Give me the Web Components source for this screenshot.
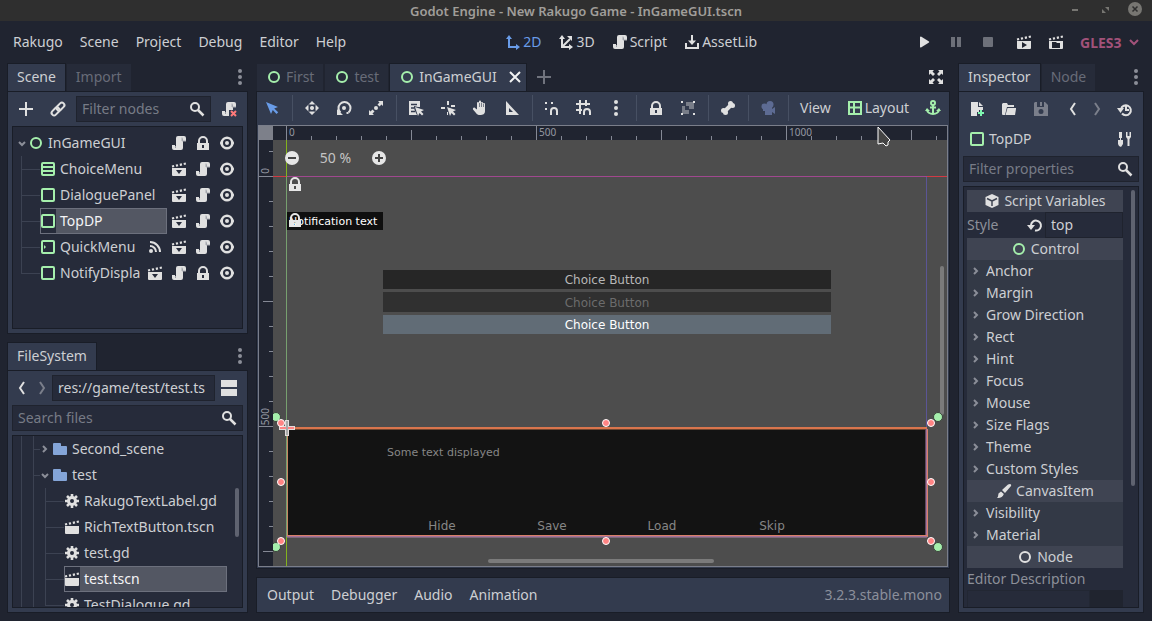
<!DOCTYPE html>
<html lang="en">
<head>
<meta charset="utf-8">
<title>Godot Engine - New Rakugo Game - InGameGUI.tscn</title>
<style>
  html, body { margin: 0; height: 100%; }
  body {
    --bg: #202430; --panel: #333b4e; --dark: #262b3a; --line: #191d27;
    --text: #cdcfd3; --dim: #686c78; --icon: #e0e0e0; --green: #a5efac; --blue: #699ce8;
    font: 14px/26px "Noto Sans", sans-serif; color: var(--text); background: var(--bg); overflow: hidden;
  }
</style>
</head>
<body>
<editor-window></editor-window>
<script>
const SCROLL = '<path d="M7 1a2 2 0 0 0-2 2v8H4v-1H1v3a2 2 0 0 0 2 2h7a2 2 0 0 0 2-2V6h3V3a2 2 0 0 0-2-2z"/><path d="M11.5 6V3.5M4.500 11v2" stroke="#9a9da5" fill="none"/><path d="M11 2.500V6h4" stroke="#a9abb1" fill="none"/>';
const CLAP_TOP = '<path d="M1 5.500 15 2.500" stroke="currentColor" stroke-width="2.200" stroke-dasharray="2.200 1.800" fill="none"/>';
const S = 'fill="none" stroke="currentColor" stroke-width="2"';
const ICONS = {
  add: '<path d="M7 1v6H1v2h6v6h2V9h6V7H9V1z"/>',
  link: `<g transform="rotate(-45 8 8)" ${S}><rect x="0" y="5.500" width="9" height="5" rx="2.500"/><rect x="7" y="5.500" width="9" height="5" rx="2.500"/></g>`,
  search: `<circle cx="6" cy="6" r="4" ${S}/><path d="m9 9 5.500 5.500" fill="none" stroke="currentColor" stroke-width="2.500"/>`,
  script: SCROLL,
  detach: SCROLL + '<path d="M8 9h8v7H8z" fill="var(--panel)"/><path d="m10 10 5 5m0-5-5 5" fill="none" stroke="#ff7a7a" stroke-width="2"/>',
  dots: '<circle cx="8" cy="2" r="2"/><circle cx="8" cy="8" r="2"/><circle cx="8" cy="14" r="2"/>',
  left: `<path d="M10 2 6 8l4 6" ${S}/>`,
  right: `<path d="m6 2 4 6-4 6" ${S}/>`,
  fold: `<path d="m6 5 3 3-3 3" ${S}/>`,
  open: `<path d="m5 7 3 3 3-3" ${S}/>`,
  pick: `<path d="m4 6 4 4 4-4" ${S}/>`,
  ring: `<circle cx="8" cy="8" r="5" ${S}/>`,
  box: `<rect x="2" y="2" width="12" height="12" rx="1" ${S}/>`,
  list: `<rect x="2" y="2" width="12" height="12" rx="1" ${S}/><path d="M2 6h12M2 10h12" ${S}/>`,
  margin: `<rect x="2" y="2" width="12" height="12" rx="1" ${S}/><path d="M4 6v4l2-2z"/>`,
  lock: '<path fill-rule="evenodd" d="M8 1a5 5 0 0 0-5 5v2H2v7h12V8h-1V6a5 5 0 0 0-5-5zm0 2a3 3 0 0 1 3 3v2H5V6a3 3 0 0 1 3-3zm-1 7h2v3H7z"/>',
  eye: '<path fill-rule="evenodd" d="M8 1.500C5 1.500 2.400 3.500 1 7.500v1c1.400 4 4 6 7 6s5.600-2 7-6v-1c-1.400-4-4-6-7-6zM8 4a4 4 0 1 1 0 8 4 4 0 0 1 0-8zm0 2a2 2 0 1 0 0 4 2 2 0 0 0 0-4z"/>',
  instance: CLAP_TOP + '<path fill-rule="evenodd" d="M1 7h14v7a1 1 0 0 1-1 1H2a1 1 0 0 1-1-1zm4 2 3 4 3-4z"/>',
  clap: CLAP_TOP + '<path d="M1 7h14v7a1 1 0 0 1-1 1H2a1 1 0 0 1-1-1z"/>',
  playscene: CLAP_TOP + '<path fill-rule="evenodd" d="M1 7h14v7a1 1 0 0 1-1 1H2a1 1 0 0 1-1-1zm5 1v6l5-3z"/>',
  playcustom: CLAP_TOP + '<path fill-rule="evenodd" d="M1 7h14v7a1 1 0 0 1-1 1H2a1 1 0 0 1-1-1zm3 1v6h8V9H9L8 8z"/>',
  signal: `<circle cx="4" cy="12" r="2"/><path d="M3 7a6 6 0 0 1 6 6M3 3a10 10 0 0 1 10 10" ${S}/>`,
  folder: '<path d="M2 2a1 1 0 0 0-1 1v10a1 1 0 0 0 1 1h12a1 1 0 0 0 1-1V6a1 1 0 0 0-1-1H9V3a1 1 0 0 0-1-1z"/>',
  gear: `<circle cx="8" cy="8" r="3.500" fill="none" stroke="currentColor" stroke-width="3"/><g stroke="currentColor" stroke-width="2.600"><path d="M8 1v3M8 12v3M1 8h3M12 8h3M3 3l2.200 2.200M10.800 10.800 13 13M13 3l-2.200 2.200M5.200 10.800 3 13"/></g>`,
  axis2: `<path d="M4 4v9h8" ${S}/><path d="m1 5 3-4 3 4zM11 10v6l4-3z"/>`,
  axis3: `<path d="M4 4v9h8M4 13l8-8" ${S}/><path d="m1 5 3-4 3 4zM11 10v6l4-3zM9 2h5v5z"/>`,
  asset: `<path d="M2 9v5h12V9M8 1v7" ${S}/><path d="M4 6.500h8L8 11z"/>`,
  play: '<path d="M4 3v10a1 1 0 0 0 1 .6l8-5a1 1 0 0 0 0-1.200l-8-5A1 1 0 0 0 4 3z"/>',
  pause: '<path d="M3 3h4v10H3zM9 3h4v10H9z"/>',
  stop: '<rect x="3" y="3" width="10" height="10" rx="1"/>',
  close: '<path d="m3 3 10 10M13 3 3 13" fill="none" stroke="currentColor" stroke-width="2"/>',
  expand: '<path d="M1 1h5L4.500 2.500 7 5 5 7 2.500 4.500 1 6zM15 1v5l-1.500-1.500L11 7 9 5l2.500-2.500L10 1zM1 15v-5l1.500 1.500L5 9l2 2-2.500 2.500L6 15zM15 15h-5l1.500-1.500L9 11l2-2 2.500 2.500L15 10z"/>',
  select: '<path d="m2 2 5 12 1.800-4 3.700 4 1.700-1.700-4-3.700L14 7z"/>',
  move: '<circle cx="8" cy="8" r="2"/><path d="M8 1 4.500 4.500h7zM8 15l-3.500-3.500h7zM1 8l3.500-3.500v7zM15 8l-3.500-3.500v7z"/><path d="M5 5l6 6M11 5l-6 6" stroke="var(--panel)" stroke-width="1.500"/><circle cx="8" cy="8" r="2"/>',
  rotate: `<circle cx="8" cy="8" r="2"/><path d="M4.500 12.500a6 6 0 1 1 8 0" ${S}/><path d="M1 9v6h6zM10.500 12h2v2h-2z"/>`,
  scale: '<circle cx="8" cy="8" r="2"/><path d="M10 1h5v5l-1.500-1.500-2 2-2-2 2-2zM6 15H1v-5l1.500 1.500 2-2 2 2-2 2z"/>',
  listselect: `<path d="M1 1h11v6h-2L6 6v2l1 3 2 4H1z"/><path d="M3 4.500h6M3 8h3M3 11.500h4" stroke="var(--panel)" stroke-width="1.500"/><path d="m7 7 3 9 1.500-3 2.500 2.500 1.500-1.500-2.500-2.500L16 10z"/>`,
  pivot: '<path d="M7 1h2v4H7zM1 7h4v2H1zM11 5h4v2h-4zM7 12h1v3H7z"/><path d="m7 7 3 9 1.500-3 2.500 2.500 1.500-1.500-2.500-2.500L16 10z"/>',
  pan: '<path d="M5 3a1 1 0 0 1 2 0V1.500a1 1 0 0 1 2 0V3a1 1 0 0 1 2 0v1a1 1 0 0 1 2 0v7c0 3-2 4-5 4-2 0-3-.5-4-2L1 9.500C.500 8 2 7 3 8l2 1.500z"/><path d="M7.500 3v4M9.500 3v4M11.500 4v3" stroke="var(--panel)" stroke-width=".6"/>',
  ruler: '<path fill-rule="evenodd" d="M2 1v14h13zm3 7 4 4H5z"/>',
  snap: `<path d="M1 2h2v2H1zM7 2h2v2H7zM1 8h2v2H1z"/><path d="M7 15v-4a3 3 0 0 1 6 0v4" ${S}/>`,
  gridsnap: `<path d="M4 0v14M10 0v6M0 4h14M0 10h6" ${S}/><path d="M8 15v-3a3 3 0 0 1 6 0v3" ${S}/>`,
  group: '<path d="M6 2h8v7H9V6H6zM2 6h3v4h4v4H2z" opacity=".4"/><path d="M1 1h2v2H1zM13 1h2v2h-2zM1 13h2v2H1zM13 13h2v2h-2z"/>',
  bone: `<path d="M4.500 11.500l7-7" fill="none" stroke="currentColor" stroke-width="4"/><circle cx="3.500" cy="10.500" r="2.500"/><circle cx="5.500" cy="12.500" r="2.500"/><circle cx="10.500" cy="3.500" r="2.500"/><circle cx="12.500" cy="5.500" r="2.500"/>`,
  camera: '<circle cx="10" cy="4.500" r="3.500"/><circle cx="4.500" cy="6.500" r="3"/><path d="M3 6h9v3l3-2v7l-3-2v3H5v-4H3z"/>',
  layout: `<path d="M2 2h12v12H2zM7 2v12M2 7.500h12" ${S}/>`,
  anchor: `<circle cx="8" cy="3" r="2" ${S}/><path d="M8 5v9M5 7.500h6M2 9c0 3.500 3 5 6 5s6-1.500 6-5" ${S}/><path d="M0 11l2-3 3 3zM16 11l-2-3-3 3z"/>`,
  newres: '<path d="M2 1h7v5h5v3h-4v2H8v4H2z"/><path d="M10 1v4h4z"/><path d="M12 9v6M9 12h6" stroke="#7ff7b1" stroke-width="2"/>',
  load: '<path d="M2 2h4l1 2h6v2H6L4 14H2a1 1 0 0 1-1-1V3z"/><path d="M6.500 7H15v1l-1 6H4.500z"/>',
  save: '<path fill-rule="evenodd" d="M2 1h2v5h7V1h1l3 3v11H1V2zm6 7a2.500 2.500 0 1 0 0 5 2.500 2.500 0 0 0 0-5zM7 1h2v4H7z"/>',
  history: `<path d="M5 12.500A5 5 0 1 0 4 8M9 5v4h3" ${S}/><path d="M0 7h7l-3.500 5z"/>`,
  tools: `<path d="M2 1h3v6H2zM1 9h5v4l-2 3-2-1-1-2zM3 7h1v2H3zM9 1h1.500v4h2V1H14v5l-1.500 2v7h-2V8L9 6z"/>`,
  cube: '<path d="M8 1 14.500 4v8L8 15l-6.500-3V4z"/><path d="M3 5.500 8 8v5M8 8l5-2.500" stroke="#3f4452" stroke-width="1.500" fill="none"/>',
  reload: `<path d="M8 13.500A5 5 0 1 0 4 8" ${S}/><path d="M0 8h8l-4 5z"/>`,
  brush: '<path d="M14 1c1 0 1.500 1 1 2l-6 7-3-3 6-5.500zM5 8.500 7.800 11C7 14 4 15.500 1 15c1.500-1.500 1-3 1.500-4.500z"/>',
  split: '<path d="M0 0h16v7H0zM0 9h16v7H0z"/>',
  zoomout: '<circle cx="8" cy="8" r="7"/><path d="M4 8h8" stroke="#444" stroke-width="2"/>',
  zoomin: '<circle cx="8" cy="8" r="7"/><path d="M4 8h8M8 4v8" stroke="#444" stroke-width="2"/>',
  min: '<path d="M5 8h6v2H5z"/>',
  restore: '<path d="M8 6h4v4zM5 8v4h4z"/>',
  quit: '<circle cx="8" cy="8" r="7"/><path d="m5.500 5.500 5 5m0-5-5 5" stroke="#2f2f2f" stroke-width="1.500"/>',
};

function define(name, html, setup) {
  const tpl = document.createElement('template');
  tpl.innerHTML = html;
  customElements.define(name, class extends HTMLElement {
    constructor() {
      super();
      this.attachShadow({ mode: 'open' }).append(tpl.content.cloneNode(true));
    }
    connectedCallback() {
      if (setup && !this.ready) { this.ready = true; setup.call(this, this.shadowRoot); }
    }
  });
}

define('g-icon', `<style>
  :host { display: block; flex: none; width: 16px; height: 16px; }
  svg { display: block; width: 100%; height: 100%; fill: currentColor; overflow: visible; }
</style><svg viewBox="0 0 16 16" aria-hidden="true"></svg>`, function (root) {
  root.querySelector('svg').innerHTML = ICONS[this.getAttribute('name')] || '';
});

/* Flat button: icon, text or both */
define('tool-button', `<style>
  :host { display: block; flex: none; }
  button { display: flex; align-items: center; justify-content: center; gap: 2px; width: 100%; min-width: 28px; height: 26px;
    margin: 0; padding: 0 6px; border: 0; background: none; font: inherit; color: inherit; white-space: nowrap; }
  g-icon { color: var(--tint, var(--icon)); }
  :host([narrow]) button { min-width: 20px; padding: 0 2px; }
</style><button type="button"><slot></slot></button>`, function (root) {
  const icon = this.getAttribute('icon');
  const button = root.querySelector('button');
  if (icon) {
    const el = document.createElement('g-icon');
    el.setAttribute('name', icon);
    button.prepend(el);
  }
  if (this.title) button.setAttribute('aria-label', this.title);
});

/* Text box with an optional magnifier at its end */
define('text-field', `<style>
  :host { display: block; position: relative; flex: 1; min-width: 0; }
  input { box-sizing: border-box; display: block; width: 100%; height: 26px; margin: 0; padding: 0 5px; outline: 0;
    border: 1px solid #1f232e; border-radius: 0; background: var(--dark); font: inherit; color: var(--text); }
  input::placeholder { color: #777b86; opacity: 1; }
  g-icon { position: absolute; right: 6px; top: 5px; color: var(--icon); }
  :host(:not([search])) g-icon { display: none; }
</style><input type="text"><g-icon name="search"></g-icon>`, function (root) {
  const input = root.querySelector('input');
  input.value = this.getAttribute('value') || '';
  input.placeholder = this.getAttribute('placeholder') || '';
  input.setAttribute('aria-label', this.getAttribute('label') || input.placeholder);
});

define('title-bar', `<style>
  :host { display: grid; grid-template-columns: 1fr auto 1fr; align-items: center; height: 21px; background: #2f2f2f; color: #a09e9a; }
  h1 { grid-column: 2; margin: 0; font: 600 13px/20px "Noto Sans", sans-serif; }
  div { display: flex; justify-content: flex-end; gap: 14px; padding: 0 9px 3px 0; }
  button { width: 16px; height: 16px; padding: 0; border: 0; background: none; color: #777672; }
</style><h1>Godot Engine - New Rakugo Game - InGameGUI.tscn</h1>
<div>
  <button aria-label="Minimize"><g-icon name="min"></g-icon></button>
  <button aria-label="Restore"><g-icon name="restore"></g-icon></button>
  <button aria-label="Close"><g-icon name="quit"></g-icon></button>
</div>`);

define('menu-bar', `<style>
  :host { display: flex; justify-content: space-between; align-items: center; height: 42px; padding: 0 12px 0 7px; }
  nav { display: flex; gap: 4px; align-items: center; }
  .words { gap: 5px; }
  .off { --tint: #6d7079; }
  .on { --tint: var(--blue); color: var(--blue); }
  .apart { margin-left: 4px; }
  .pick { position: relative; color: #a2527a; margin-left: 4px; }
  select { appearance: none; display: block; width: 62px; height: 26px; margin: 0; padding: 0 0 0 2px; border: 0; background: none; font: bold 14px "Noto Sans", sans-serif; color: inherit; }
  .pick g-icon { position: absolute; right: -2px; top: 5px; pointer-events: none; }
</style>
<nav class="words" aria-label="Main menu">
  <tool-button>Rakugo</tool-button><tool-button>Scene</tool-button><tool-button>Project</tool-button>
  <tool-button>Debug</tool-button><tool-button>Editor</tool-button><tool-button>Help</tool-button>
</nav>
<nav class="words" aria-label="Workspace">
  <tool-button icon="axis2" class="on">2D</tool-button><tool-button icon="axis3">3D</tool-button>
  <tool-button icon="script">Script</tool-button><tool-button icon="asset">AssetLib</tool-button>
</nav>
<nav aria-label="Run">
  <tool-button icon="play" title="Play"></tool-button><tool-button icon="pause" class="off" title="Pause"></tool-button>
  <tool-button icon="stop" class="off" title="Stop"></tool-button><tool-button icon="playscene" class="apart" title="Play scene"></tool-button>
  <tool-button icon="playcustom" title="Play custom scene"></tool-button>
  <div class="pick"><select aria-label="Renderer"><option>GLES3</option></select><g-icon name="pick"></g-icon></div>
</nav>`);

define('dock-tab', `<style>
  :host { display: flex; align-items: flex-start; gap: 4px; height: 27px; padding: 0 9px; border: 1px solid transparent; border-bottom: 0;
    background: #262b39 padding-box; color: var(--dim); }
  :host([active]) { background: var(--panel); border-color: var(--line); color: var(--text); margin-bottom: -1px; padding-bottom: 1px; }
  button { display: flex; align-items: center; gap: 4px; height: 26px; margin: 0; padding: 0; border: 0; background: none; font: inherit; color: inherit; }
  .ring { color: var(--green); }
  .close { margin: 0 -6px 0 6px; color: #f2f2f2; }
  :host(:not([scene])) .ring, :host(:not([closable])) .close { display: none; }
</style><button role="tab"><g-icon class="ring" name="ring"></g-icon><slot></slot></button>
<button class="close" aria-label="Close tab"><g-icon name="close"></g-icon></button>`, function (root) {
  root.querySelector('[role=tab]').setAttribute('aria-selected', this.hasAttribute('active'));
});

define('dock-panel', `<style>
  :host { display: flex; flex-direction: column; min-width: 0; min-height: 0; flex: 1; }
  header { display: flex; align-items: center; flex: none; height: 28px; }
  .tabs { display: flex; align-self: flex-end; }
  .end { margin-left: auto; }
  section { display: flex; flex-direction: column; gap: 4px; flex: 1; min-height: 0; padding: var(--inset, 4px);
    border: 1px solid var(--line); background: var(--panel); }
</style><header><div class="tabs" role="tablist"><slot name="tab"></slot></div><slot name="after"></slot><div class="end"><slot name="end"></slot></div></header>
<section><slot></slot></section>`);

define('tool-row', `<style>
  :host { display: flex; align-items: center; gap: 4px; flex: none; height: 26px; }
  :host([tight]) { gap: 0; }
</style><slot></slot>`);

/* Tree row; guides: "|" passing line, "+" branch, "L" last branch */
define('tree-row', `<style>
  :host { display: flex; align-items: center; height: 26px; padding: 0 7px 0 8px; }
  .guides { display: flex; align-self: stretch; }
  .guides i { box-sizing: border-box; width: 12px; background: linear-gradient(#3c4252, #3c4252) 0 0 / 1px 100% no-repeat; }
  .guides i.branch, .guides i.last { width: var(--reach, 19px);
    background: linear-gradient(#3c4252, #3c4252) 0 0 / 1px 100% no-repeat, linear-gradient(#3c4252, #3c4252) 0 13px / 100% 1px no-repeat; }
  .guides i.last { background-size: 1px 13px, 100% 1px; }
  .arrow { color: #8b8e98; margin: 0 -2px 0 -7px; }
  .arrow.branch { margin: 0 -1px 0 -3px; }
  .cell { display: flex; align-items: center; flex: 1; min-width: 0; height: 26px; }
  .kind { color: var(--tint, var(--icon)); }
  .name { flex: 1; padding-left: 4px; overflow: hidden; white-space: nowrap; }
  :host([selected]) .cell { outline: 1px solid #6c707d; outline-offset: -1px; }
  :host([selected]) .name { background: #535763; color: #f4f4f6; }
  .extra { display: flex; gap: 8px; padding-left: 4px; color: var(--icon); }
</style><div class="guides"></div>
<div class="cell"><span class="name"><slot></slot></span></div><div class="extra"></div>`, function (root) {
  const kinds = { '|': '', '+': 'branch', 'L': 'last' };
  const guides = this.getAttribute('guides') || '';
  const arrow = this.getAttribute('arrow');
  const cell = root.querySelector('.cell');
  root.querySelector('.guides').innerHTML = [...guides].map(c => `<i class="${kinds[c]}"></i>`).join('');
  cell.insertAdjacentHTML('afterbegin', `<g-icon class="kind" name="${this.getAttribute('icon')}"></g-icon>`);
  if (arrow) cell.insertAdjacentHTML('beforebegin', `<g-icon class="arrow ${guides ? 'branch' : ''}" name="${arrow}"></g-icon>`);
  root.querySelector('.extra').innerHTML = (this.getAttribute('extra') || '').split(' ').filter(Boolean).map(n => `<g-icon name="${n}"></g-icon>`).join('');
});

define('scene-dock', `<style>
  :host { display: flex; flex: 1; min-height: 0; }
  .tree { flex: 1; min-height: 0; padding: 3px 0; border: 1px solid var(--line); background: var(--dark); overflow: hidden; --tint: var(--green); }
  .more { --tint: #8b8e98; margin-right: -6px; }
</style><dock-panel>
  <dock-tab slot="tab" active>Scene</dock-tab><dock-tab slot="tab">Import</dock-tab>
  <tool-button slot="end" class="more" icon="dots" title="Dock options"></tool-button>
  <tool-row>
    <tool-button icon="add" title="Add node"></tool-button><tool-button icon="link" title="Instance scene"></tool-button>
    <text-field search placeholder="Filter nodes"></text-field><tool-button icon="detach" title="Detach script"></tool-button>
  </tool-row>
  <div class="tree">
    <tree-row icon="ring" arrow="open" extra="script lock eye">InGameGUI</tree-row>
    <tree-row guides="+" icon="list" extra="instance script eye">ChoiceMenu</tree-row>
    <tree-row guides="+" icon="box" extra="instance script eye">DialoguePanel</tree-row>
    <tree-row guides="+" icon="box" selected extra="instance script eye">TopDP</tree-row>
    <tree-row guides="+" icon="margin" extra="signal instance script eye">QuickMenu</tree-row>
    <tree-row guides="L" icon="box" extra="instance script lock eye">NotifyDispla</tree-row>
  </div>
</dock-panel>`);

define('files-dock', `<style>
  :host { display: flex; flex: 1; min-height: 0; }
  .tree { position: relative; flex: 1; min-height: 0; border: 1px solid var(--line); background: var(--dark); overflow: hidden; }
  tree-row { padding-right: 11px; }
  .dir { --tint: #84a5d8; --reach: 7px; }
  .bar { position: absolute; right: 3px; top: 52px; width: 4px; height: 49px; border-radius: 2px; background: #5f6370; }
  .more { --tint: #8b8e98; margin-right: -6px; }
  .off { --tint: #7b7f8b; }
</style><dock-panel>
  <dock-tab slot="tab" active>FileSystem</dock-tab>
  <tool-button slot="end" class="more" icon="dots" title="Dock options"></tool-button>
  <tool-row tight>
    <tool-button narrow icon="left" title="Back"></tool-button><tool-button narrow class="off" icon="right" title="Forward"></tool-button>
    <text-field value="res://game/test/test.ts" label="Path"></text-field>
    <tool-button icon="split" title="Split mode"></tool-button>
  </tool-row>
  <text-field style="flex:none" search placeholder="Search files"></text-field>
  <div class="tree">
    <tree-row class="dir" guides="|+" arrow="fold" icon="folder">Second_scene</tree-row>
    <tree-row class="dir" guides="|+" arrow="open" icon="folder">test</tree-row>
    <tree-row guides="||+" icon="gear">RakugoTextLabel.gd</tree-row>
    <tree-row guides="||+" icon="clap">RichTextButton.tscn</tree-row>
    <tree-row guides="||+" icon="gear">test.gd</tree-row>
    <tree-row guides="||+" icon="clap" selected>test.tscn</tree-row>
    <tree-row guides="||L" icon="gear">TestDialogue.gd</tree-row>
    <div class="bar"></div>
  </div>
</dock-panel>`);

define('prop-head', `<style>
  :host { display: flex; align-items: center; justify-content: center; gap: 4px; height: 22px; line-height: 22px; background: #3f4452; }
</style><slot name="icon"></slot><span><slot></slot></span>`);

define('prop-fold', `<style>
  :host { display: block; background: #333946; }
  button { display: flex; align-items: center; gap: 2px; width: 100%; height: 22px; margin: 0; padding: 0 0 0 1px; border: 0; background: none; font: inherit; line-height: 22px; color: inherit; }
  g-icon { color: #8b8e98; }
</style><button aria-expanded="false"><g-icon name="fold"></g-icon><slot></slot></button>`);

define('inspector-dock', `<style>
  :host { display: flex; flex: none; width: 186px; min-height: 0; }
  .more { --tint: #8b8e98; margin-right: -6px; }
  .off { --tint: #7b7f8b; }
  .push { margin-left: auto; }
  .obj { display: flex; align-items: center; gap: 4px; padding-left: 6px; }
  .obj g-icon { color: var(--green); }
  .props { display: flex; gap: 8px; flex: 1; min-height: 0; padding: 3px 3px 0 3px; border: 1px solid var(--line); background: var(--dark); overflow: hidden; }
  .list { flex: 1; min-width: 0; }
  .bar { width: 4px; height: 296px; border-radius: 2px; background: #5f6370; }
  .field { display: grid; grid-template-columns: 1fr 1fr; height: 26px; color: #8d9099; }
  .field label { display: flex; align-items: center; justify-content: space-between; padding-right: 2px; }
  .field g-icon, prop-head g-icon { color: var(--icon); }
  prop-head g-icon.green { color: var(--green); }
  .desc { line-height: 22px; color: #8d9099; display: block; }
  .area { display: flex; height: 30px; }
  textarea { box-sizing: border-box; flex: 1; min-width: 0; resize: none; margin: 0; border: 1px solid #222733; background: var(--dark); }
  .area i { width: 33px; background: #20242f; }
</style><dock-panel>
  <dock-tab slot="tab" active>Inspector</dock-tab><dock-tab slot="tab">Node</dock-tab>
  <tool-button slot="end" class="more" icon="dots" title="Dock options"></tool-button>
  <tool-row>
    <tool-button icon="newres" title="New resource"></tool-button><tool-button icon="load" title="Load resource"></tool-button>
    <tool-button icon="save" class="off" title="Save resource"></tool-button>
    <tool-button narrow class="push" icon="left" title="Previous"></tool-button><tool-button narrow class="off" icon="right" title="Next"></tool-button>
    <tool-button icon="history" title="History"></tool-button>
  </tool-row>
  <tool-row><div class="obj"><g-icon name="box"></g-icon><span>TopDP</span></div><tool-button class="push" icon="tools" title="Object properties"></tool-button></tool-row>
  <text-field style="flex:none" search placeholder="Filter properties"></text-field>
  <div class="props"><div class="list">
    <prop-head><g-icon slot="icon" name="cube"></g-icon>Script Variables</prop-head>
    <div class="field"><label>Style<g-icon name="reload"></g-icon></label><text-field value="top" label="Style"></text-field></div>
    <prop-head><g-icon slot="icon" class="green" name="ring"></g-icon>Control</prop-head>
    <prop-fold>Anchor</prop-fold><prop-fold>Margin</prop-fold><prop-fold>Grow Direction</prop-fold>
    <prop-fold>Rect</prop-fold><prop-fold>Hint</prop-fold><prop-fold>Focus</prop-fold><prop-fold>Mouse</prop-fold>
    <prop-fold>Size Flags</prop-fold><prop-fold>Theme</prop-fold><prop-fold>Custom Styles</prop-fold>
    <prop-head><g-icon slot="icon" name="brush"></g-icon>CanvasItem</prop-head>
    <prop-fold>Visibility</prop-fold><prop-fold>Material</prop-fold>
    <prop-head><g-icon slot="icon" name="ring"></g-icon>Node</prop-head>
    <label class="desc" for="desc">Editor Description</label>
    <div class="area"><textarea id="desc"></textarea><i></i></div>
  </div><div class="bar"></div></div>
</dock-panel>`);

/* 2D viewport: free canvas with rulers, the edited scene and its handles */
define('canvas-view', `<style>
  :host { display: block; position: relative; flex: 1; min-height: 0; border: 1px solid #7a7e8a; background: #4d4d4d; overflow: hidden;
    font-family: "DejaVu Sans", sans-serif; font-size: 12px; }
  svg.art { position: absolute; inset: 0; width: 100%; height: 100%; }
  .at { position: absolute; left: var(--x); top: var(--y); }
  .num { font: 10px/12px "Noto Sans", sans-serif; color: #9598a2; }
  .up { writing-mode: vertical-rl; transform: rotate(180deg); }
  .choice { width: 448px; height: 19px; padding: 2px 0 0; border: 0; background: #262626; font: 12px/17px "DejaVu Sans", sans-serif; color: #b8b8b8; }
  .choice.dis { height: 20px; background: #303030; color: #6c6c6c; }
  .choice.hot { background: #616c76; color: #fff; }
  .note { box-sizing: border-box; width: 96px; height: 18px; padding-left: 2px; font-size: 11px; line-height: 20px; background: #0f0f0f; color: #fff; white-space: nowrap; }
  .dialog { box-sizing: border-box; width: 640px; height: 108px; padding: 17px 100px 0; background: #131313; color: #868686; display: flex; flex-direction: column; justify-content: space-between; }
  .dialog p { margin: 0; font-size: 11px; line-height: 16px; }
  .quick { display: grid; grid-template-columns: repeat(4, 1fr); height: 20px; }
  .quick button { padding: 0; border: 0; background: none; font: 12px/20px "DejaVu Sans", sans-serif; color: #868686; }
  .zoom { display: flex; align-items: center; font: 14px/26px "Noto Sans", sans-serif; color: #c4c4c4; }
  .zoom button { width: 16px; height: 16px; padding: 0; border: 0; background: none; color: #e6e6e6; }
  .zoom span { width: 71px; text-align: center; }
  g-icon { color: #e6e6e6; }
</style>
<button class="at choice" style="--x:124px;--y:144px">Choice Button</button>
<button class="at choice dis" style="--x:124px;--y:166px">Choice Button</button>
<button class="at choice hot" style="--x:124px;--y:189px">Choice Button</button>
<div class="at note" style="--x:28px;--y:86px">Notification text</div>
<div class="at dialog" style="--x:28px;--y:302px">
  <p>Some text displayed</p>
  <div class="quick"><button>Hide</button><button>Save</button><button>Load</button><button>Skip</button></div>
</div>
<svg class="art" aria-hidden="true">
  <defs>
    <pattern id="tx" x="27" y="0" width="250" height="14" patternUnits="userSpaceOnUse">
      <g fill="#858995"><path d="M0 0h1v14H0zM125 4h1v10h-1z"/><path d="M25 10h1v4h-1zM50 10h1v4h-1zM75 10h1v4h-1zM100 10h1v4h-1zM150 10h1v4h-1zM175 10h1v4h-1zM200 10h1v4h-1zM225 10h1v4h-1z"/></g>
    </pattern>
    <pattern id="ty" x="0" y="50" width="14" height="250" patternUnits="userSpaceOnUse">
      <g fill="#858995"><path d="M0 0h14v1H0zM4 125h10v1H4z"/><path d="M10 25h4v1h-4zM10 50h4v1h-4zM10 75h4v1h-4zM10 100h4v1h-4zM10 150h4v1h-4zM10 175h4v1h-4zM10 200h4v1h-4zM10 225h4v1h-4z"/></g>
    </pattern>
  </defs>
  <rect x="14" y="50" width="100%" height="1" fill="#d23a44"/><rect x="28" y="50" width="640" height="1" fill="#a0488f"/>
  <rect x="27" y="14" width="1" height="100%" fill="#83b31e"/><rect x="27" y="51" width="1" height="360" fill="#77a06f"/>
  <rect x="667" y="51" width="1" height="252" fill="#5b5596"/>
  <rect x="28" y="301" width="640" height="2" fill="#d9754d"/><rect x="28" y="303" width="638" height="1" fill="#6d4530"/>
  <rect x="28" y="303" width="1" height="107" fill="#c98563"/>
  <rect x="666" y="303" width="1" height="107" fill="#5f4a60"/><rect x="667" y="303" width="1" height="108" fill="#a5709a"/><rect x="668" y="303" width="1" height="108" fill="#d98068"/>
  <rect x="28" y="409" width="640" height="1" fill="#d98068"/><rect x="28" y="410" width="640" height="1" fill="#a5709a"/><rect x="28" y="411" width="640" height="1" fill="#7d6878"/>
  <rect x="681" y="140" width="4" height="149" rx="2" fill="#7b7b7b"/><rect x="229" y="433" width="226" height="4" rx="2" fill="#7b7b7b"/>
  <g fill="#a5efac" stroke="#3a433b"><circle cx="17" cy="291" r="4.500"/><circle cx="679" cy="291" r="4.500"/><circle cx="17" cy="421" r="4.500"/><circle cx="679" cy="421" r="4.500"/></g>
  <path d="M20 302h16M28 294v16" stroke="#e2dcdc" stroke-width="4"/><path d="M21 302h14" stroke="#ff8484" stroke-width="2"/><path d="M28 295v14" stroke="#a9a9a9" stroke-width="2"/>
  <g fill="#ff8484" stroke="#fff"><circle cx="22" cy="297" r="3.500"/><circle cx="347" cy="297" r="3.500"/><circle cx="672" cy="297" r="3.500"/>
  <circle cx="22" cy="356" r="3.500"/><circle cx="672" cy="356" r="3.500"/><circle cx="22" cy="415" r="3.500"/><circle cx="347" cy="415" r="3.500"/><circle cx="672" cy="415" r="3.500"/></g>
  <rect width="100%" height="14" fill="#202430"/><rect width="14" height="100%" fill="#202430"/>
  <rect x="14" width="100%" height="14" fill="url(#tx)"/><rect y="14" width="14" height="100%" fill="url(#ty)"/>
  <rect width="14" height="14" fill="#7d808a"/>
</svg>
<span class="at num" style="--x:30px;--y:0px">0</span><span class="at num" style="--x:280px;--y:0px">500</span><span class="at num" style="--x:530px;--y:0px">1000</span>
<span class="at num up" style="--x:0px;--y:42px">0</span><span class="at num up" style="--x:0px;--y:282px">500</span>
<div class="at zoom" style="--x:25px;--y:19px"><button aria-label="Zoom out"><g-icon name="zoomout"></g-icon></button><span>50 %</span><button aria-label="Zoom in"><g-icon name="zoomin"></g-icon></button></div>
<g-icon class="at" name="lock" style="--x:28px;--y:50px"></g-icon><g-icon class="at" name="lock" style="--x:28px;--y:86px"></g-icon>
<svg class="at" style="--x:618px;--y:0px" width="14" height="22" aria-hidden="true"><path d="M1 1v17l5-1 3 3 2-1v-3l2-2z" fill="#444" stroke="#fff"/></svg>`);

define('scene-view', `<style>
  :host { display: flex; flex: 1; min-height: 0; --inset: 0 1px 1px; }
  .tools { display: flex; align-items: center; gap: 4px; flex: none; height: 32px; margin-bottom: -3px; }
  .tools i { width: 1px; height: 26px; margin: 0 1px 0 2px; background: #475063; }
  .new { --tint: #70737d; margin-left: 3px; }
  .blue { --tint: var(--blue); } .off { --tint: #5d6b93; } .green { --tint: var(--green); }
</style><dock-panel>
  <dock-tab slot="tab" scene>First</dock-tab><dock-tab slot="tab" scene>test</dock-tab><dock-tab slot="tab" scene active closable>InGameGUI</dock-tab>
  <tool-button slot="after" class="new" icon="add" title="New scene"></tool-button>
  <tool-button slot="end" icon="expand" title="Distraction free mode"></tool-button>
  <div class="tools" role="toolbar">
    <tool-button class="blue" icon="select" title="Select"></tool-button><i></i>
    <tool-button icon="move" title="Move"></tool-button><tool-button icon="rotate" title="Rotate"></tool-button><tool-button icon="scale" title="Scale"></tool-button><i></i>
    <tool-button icon="listselect" title="List select"></tool-button><tool-button icon="pivot" title="Pivot"></tool-button>
    <tool-button icon="pan" title="Pan"></tool-button><tool-button icon="ruler" title="Ruler"></tool-button><i></i>
    <tool-button icon="snap" title="Smart snap"></tool-button><tool-button icon="gridsnap" title="Grid snap"></tool-button><tool-button icon="dots" title="Snap options"></tool-button><i></i>
    <tool-button icon="lock" title="Lock"></tool-button><tool-button icon="group" title="Group"></tool-button><i></i>
    <tool-button icon="bone" title="Skeleton"></tool-button><i></i>
    <tool-button class="off" icon="camera" title="Camera override"></tool-button><i></i>
    <tool-button>View</tool-button><tool-button class="green" icon="layout">Layout</tool-button>
    <tool-button class="green" icon="anchor" title="Anchors"></tool-button>
  </div>
  <canvas-view></canvas-view>
</dock-panel>`);

define('bottom-bar', `<style>
  :host { display: flex; align-items: center; gap: 5px; flex: none; height: 34px; padding: 0 7px 0 4px; border: 1px solid var(--line); background: var(--panel); }
  span { margin-left: auto; color: #8b8f9b; }
</style><tool-button>Output</tool-button><tool-button>Debugger</tool-button><tool-button>Audio</tool-button><tool-button>Animation</tool-button><span>3.2.3.stable.mono</span>`);

define('editor-window', `<style>
  :host { display: flex; flex-direction: column; height: 100vh; }
  main { display: flex; gap: 8px; flex: 1; min-height: 0; padding: 0 8px 8px 7px; }
  .col { display: flex; flex-direction: column; gap: 8px; min-width: 0; }
  .left { width: 241px; flex: none; }
  .mid { flex: 1; }
</style><title-bar></title-bar><menu-bar></menu-bar>
<main>
  <div class="col left"><scene-dock></scene-dock><files-dock></files-dock></div>
  <div class="col mid"><scene-view></scene-view><bottom-bar></bottom-bar></div>
  <inspector-dock></inspector-dock>
</main>`);
</script>
</body>
</html>
